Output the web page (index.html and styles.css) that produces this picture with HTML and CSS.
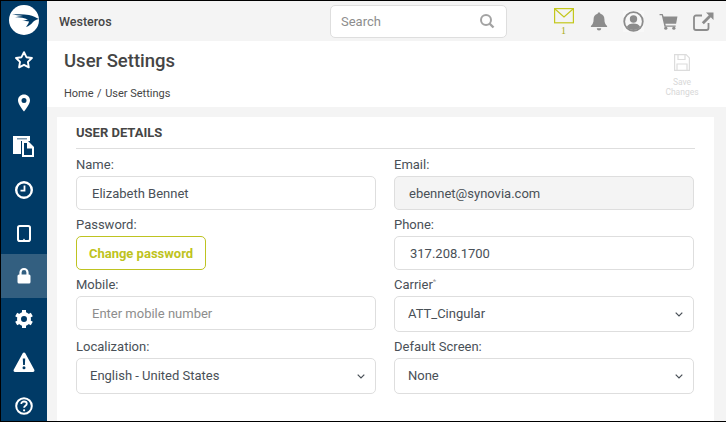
FILE: index.html
```html
<!DOCTYPE html>
<html lang="en">
<head>
  <meta charset="UTF-8">
  <meta name="viewport" content="width=device-width, initial-scale=1.0">
  <title>User Settings</title>
  <link rel="stylesheet" href="styles.css">
</head>
<body>
  <div class="app">
    <nav class="sidebar">
      <div class="logo">
        <svg width="30" height="30" viewBox="0 0 30 30">
          <circle cx="15" cy="15" r="15" fill="#fff"/>
          <path d="M3 9.500 C9 9 15 9 20 10 C24 11 27 12.500 30 14 C27 14.500 25.500 15.500 24 17 C22 19.500 20 21 17 22 C18.500 20 19.500 18.500 20 16.500 L13 15.500 C16 15.500 17 15 19 14.500 C14 12.500 9 12 5 12.500 C8 11.500 11 11 14 11 C10 10.300 6 10 3 9.500 Z" fill="#003a66"/>
        </svg>
      </div>
      <a class="nav-item">
        <svg width="20" height="20" viewBox="0 0 20 20"><path d="M10 2.200l2.400 5 5.500.8-4 3.900.9 5.500-4.800-2.600-4.900 2.600.9-5.500-4-3.900 5.500-.8z" fill="none" stroke="#fff" stroke-width="1.900" stroke-linejoin="round"/></svg>
      </a>
      <a class="nav-item">
        <svg width="20" height="20" viewBox="0 0 20 20"><path fill-rule="evenodd" d="M10 1.500c-3.400 0-6 2.600-6 5.800 0 3.500 4 8.700 6 11.200 2-2.500 6-7.700 6-11.200 0-3.200-2.600-5.800-6-5.800zm0 3.500a2.500 2.500 0 1 1 0 5 2.500 2.500 0 0 1 0-5z" fill="#fff"/></svg>
      </a>
      <a class="nav-item">
        <svg width="22" height="23" viewBox="0 0 22 23"><path d="M0 1h17v5H8v13H0z" fill="#fff"/><path d="M4 3h10v1.500H4z" fill="#7d97ad"/><path d="M9 6h6l6 6v10H9z" fill="#fff"/><path d="M11 8h3v5.500h5V20h-8z" fill="#003a66"/></svg>
      </a>
      <a class="nav-item">
        <svg width="20" height="20" viewBox="0 0 20 20"><circle cx="10" cy="10" r="7.800" fill="none" stroke="#fff" stroke-width="2.400"/><path d="M10.500 5.500v5.200H6.500" fill="none" stroke="#fff" stroke-width="1.800"/></svg>
      </a>
      <a class="nav-item">
        <svg width="20" height="20" viewBox="0 0 20 20"><rect x="4" y="3" width="12" height="15" rx="1.800" fill="none" stroke="#fff" stroke-width="2"/><circle cx="10" cy="16.500" r=".8" fill="#fff"/></svg>
      </a>
      <a class="nav-item active">
        <svg width="20" height="20" viewBox="0 0 20 20"><path d="M6.500 9V6.500a3.500 3.500 0 0 1 7 0V9" fill="none" stroke="#fff" stroke-width="2.200"/><rect x="3.500" y="8.500" width="13" height="9" rx="1.500" fill="#fff"/></svg>
      </a>
      <a class="nav-item">
        <svg width="20" height="20" viewBox="0 0 20 20"><circle cx="10" cy="10" r="5" fill="none" stroke="#fff" stroke-width="4"/><path d="M10 1v4M10 15v4M2.200 5.500l3.500 2M14.300 12.500l3.500 2M17.800 5.500l-3.500 2M5.700 12.500l-3.500 2" stroke="#fff" stroke-width="4"/></svg>
      </a>
      <a class="nav-item">
        <svg width="22" height="22" viewBox="0 0 22 22"><path fill-rule="evenodd" d="M11 1.500c.6 0 1 .3 1.300.8l9 16.500c.5 1-.1 2.200-1.300 2.200H2c-1.200 0-1.800-1.200-1.300-2.200l9-16.500c.3-.5.7-.8 1.300-.8zM9.800 7.500l.3 6.500h1.800l.3-6.500zM11 15.300a1.500 1.500 0 1 0 0 3 1.500 1.500 0 0 0 0-3z" fill="#fff"/></svg>
      </a>
      <a class="nav-item">
        <svg width="20" height="20" viewBox="0 0 20 20"><circle cx="10" cy="10" r="7.800" fill="none" stroke="#fff" stroke-width="2"/><path d="M7.300 8c0-1.600 1.200-2.500 2.700-2.500s2.800.9 2.800 2.300c0 2-2.700 2-2.700 4" fill="none" stroke="#fff" stroke-width="1.800"/><circle cx="10.100" cy="14.300" r="1.100" fill="#fff"/></svg>
      </a>
    </nav>

    <div class="main">
      <header class="topbar">
        <div class="brand">Westeros</div>
        <div class="search">
          <input type="text" placeholder="Search">
          <svg width="16" height="16" viewBox="0 0 16 16"><circle cx="7" cy="7" r="5" fill="none" stroke="#a3a3a3" stroke-width="2"/><path d="M10.500 10.500L14.500 14.500" stroke="#a3a3a3" stroke-width="2.400"/></svg>
        </div>
        <div class="top-icons">
          <a class="top-icon mail">
            <svg width="20" height="16" viewBox="0 0 20 16"><rect x=".6" y=".6" width="18.800" height="14.200" fill="none" stroke="#c3c71c" stroke-width="1.200"/><path d="M1 1l9 8 9-8" fill="none" stroke="#c3c71c" stroke-width="1.200"/></svg>
            <span class="mail-count">1</span>
          </a>
          <a class="top-icon">
            <svg width="18" height="21" viewBox="0 0 20 22"><path d="M10 1c1 0 1.500.6 1.500 1.500 3 .7 4.500 3 4.500 6 0 4 1 5.500 3 7.500v1H1v-1c2-2 3-3.500 3-7.500 0-3 1.500-5.300 4.500-6C8.500 1.600 9 1 10 1z" fill="#8c8c8c"/><path d="M7.500 18.500h5a2.500 2.500 0 0 1-5 0z" fill="#8c8c8c"/></svg>
          </a>
          <a class="top-icon">
            <svg class="user-icon" width="21" height="21" viewBox="0 0 21 21"><circle cx="10.500" cy="10.500" r="9.300" fill="none" stroke="#8c8c8c" stroke-width="1.800"/><circle cx="10.500" cy="8" r="3.700" fill="#8c8c8c"/><path d="M3.800 16c1-2.500 3.500-3.500 6.700-3.500s5.700 1 6.700 3.500c-1.700 2-4 3-6.700 3s-5-1-6.700-3z" fill="#8c8c8c"/></svg>
          </a>
          <a class="top-icon">
            <svg width="19" height="17" viewBox="0 0 20 19"><path d="M0 1h3.500l1 3H20l-1.500 8H6.500l.4 2H18v1.500H5.500L2.500 2.500H0z" fill="#8c8c8c"/><circle cx="7" cy="17" r="1.800" fill="#8c8c8c"/><circle cx="16" cy="17" r="1.800" fill="#8c8c8c"/></svg>
          </a>
          <a class="top-icon">
            <svg width="21" height="19" viewBox="0 0 21 19"><path d="M9 3.500H3A2 2 0 0 0 1 5.500v10.500a2 2 0 0 0 2 2h10.500a2 2 0 0 0 2-2v-5" fill="none" stroke="#8c8c8c" stroke-width="1.800"/><path d="M13 .5h7.500V8l-2.700-2.700-7 7-2-2 7-7z" fill="#8c8c8c"/></svg>
          </a>
        </div>
      </header>

      <div class="page-head">
        <div class="page-title">
          <h1>User Settings</h1>
          <div class="breadcrumb">Home<span class="sep">/</span>User Settings</div>
        </div>
        <button class="save-btn" disabled>
          <svg width="16" height="17" viewBox="0 0 16 17"><path d="M.6.6h11.500l3.300 3.300v12.500H.6z" fill="none" stroke="#dcdcdc" stroke-width="1.200"/><path d="M4 1v4.500h7V1M3 16v-6h10v6" fill="none" stroke="#dcdcdc" stroke-width="1.200"/></svg>
          <span>Save<br>Changes</span>
        </button>
      </div>

      <div class="content">
        <section class="card">
          <h2>USER DETAILS</h2>
          <div class="form-grid">
            <div class="field">
              <label>Name:</label>
              <input type="text" value="Elizabeth Bennet">
            </div>
            <div class="field">
              <label>Email:</label>
              <input type="text" value="ebennet@synovia.com" class="readonly" readonly>
            </div>
            <div class="field">
              <label>Password:</label>
              <button class="change-btn">Change password</button>
            </div>
            <div class="field">
              <label>Phone:</label>
              <input type="text" value="317.208.1700">
            </div>
            <div class="field">
              <label>Mobile:</label>
              <input type="text" placeholder="Enter mobile number">
            </div>
            <div class="field">
              <label>Carrier<sup>*</sup></label>
              <select><option>ATT_Cingular</option></select>
            </div>
            <div class="field">
              <label>Localization:</label>
              <select><option>English - United States</option></select>
            </div>
            <div class="field">
              <label>Default Screen:</label>
              <select><option>None</option></select>
            </div>
          </div>
        </section>
      </div>
    </div>
  </div>
</body>
</html>
```

FILE: styles.css
```css
* {
  margin: 0;
  padding: 0;
  box-sizing: border-box;
}

html,
body {
  height: 100%;
  overflow: hidden;
}

body {
  font-family: Roboto, "Liberation Sans", sans-serif;
  color: #495057;
  background-color: #f4f4f4;
  border-top: 1px solid #000;
  border-left: 1px solid #000;
  border-bottom: 1px solid #000;
}

.app {
  display: flex;
  height: 100%;
}

/* sidebar */
.sidebar {
  width: 46px;
  flex-shrink: 0;
  overflow: hidden;
  background-color: #003a66;
  display: flex;
  flex-direction: column;
}

.logo {
  height: 37.5px;
  flex-shrink: 0;
  display: flex;
  justify-content: center;
  align-items: center;
}

.nav-item {
  height: 43.2px;
  flex-shrink: 0;
  display: flex;
  justify-content: center;
  align-items: center;
}

.nav-item.active {
  background-color: #335f80;
}

/* top bar */
.main {
  flex: 1;
  min-width: 0;
  display: flex;
  flex-direction: column;
}

.topbar {
  height: 40px;
  flex-shrink: 0;
  display: flex;
  align-items: center;
  padding-left: 12px;
  background-color: #f4f4f4;
}

.brand {
  width: 271px;
  font-size: 12.5px;
  font-weight: 500;
  color: #454545;
}

.search {
  width: 177px;
  height: 33px;
  padding: 0 11px 0 10px;
  display: flex;
  align-items: center;
  background-color: #fff;
  border: 1px solid #dedede;
  border-radius: 5px;
}

.search input {
  flex: 1;
  min-width: 0;
  border: none;
  outline: none;
  font-family: inherit;
  font-size: 13px;
}

.search input::placeholder {
  color: #8d8d8d;
}

.top-icons {
  display: flex;
  margin-left: 39px;
  height: 40px;
}

.top-icon {
  width: 35px;
  height: 40px;
  display: flex;
  flex-direction: column;
  justify-content: center;
  align-items: center;
}

.top-icon.mail {
  justify-content: flex-start;
  padding-top: 7px;
}

.mail-count {
  margin-top: 2px;
  font-family: "Liberation Serif", serif;
  font-size: 10px;
  line-height: 10px;
  color: #a8ac20;
}

.user-icon {
  background-color: #f8f8f8;
}

/* page header */
.page-head {
  height: 66px;
  flex-shrink: 0;
  display: flex;
  justify-content: space-between;
  padding: 0 24px 0 17px;
  background-color: #fff;
}

.page-title h1 {
  margin-top: 8px;
  font-size: 18.5px;
  line-height: 24px;
  font-weight: 500;
  color: #454545;
}

.breadcrumb {
  margin-top: 13px;
  font-size: 11px;
  line-height: 16px;
  color: #454545;
}

.sep {
  margin: 0 3.500px;
}

.save-btn {
  width: 40px;
  padding-top: 13px;
  display: flex;
  flex-direction: column;
  align-items: center;
  gap: 6px;
  border: none;
  background: none;
  font-family: inherit;
  font-size: 8.500px;
  line-height: 10px;
  color: #d8d8d8;
}

/* card */
.content {
  flex: 1;
  padding: 10px 12px 0 10px;
}

.card {
  height: 100%;
  padding: 0 19px;
  background-color: #fff;
}

.card h2 {
  height: 32px;
  padding-top: 8px;
  font-size: 13px;
  line-height: 16px;
  font-weight: 700;
  color: #454545;
  border-bottom: 1px solid #dedede;
}

.form-grid {
  display: grid;
  grid-template-columns: 300px 300px;
  column-gap: 18px;
  padding-top: 5px;
}

.field {
  display: flex;
  flex-direction: column;
  margin-bottom: 4px;
}

.field label {
  height: 22px;
  font-size: 13px;
  line-height: 21px;
}

.field sup {
  font-size: 8px;
  line-height: 0;
  color: #999;
}

.field input,
.field select {
  height: 34px;
  font-family: inherit;
  font-size: 13px;
  color: #495057;
  background-color: #fff;
  border: 1px solid #dedede;
  border-radius: 5px;
  outline: none;
}

.field input {
  padding: 0 15px;
}

.field input::placeholder {
  color: #8d8d8d;
}

.field input.readonly {
  background-color: #f4f4f4;
  padding-left: 14px;
}

.field select {
  height: 36px;
  padding: 0 13px 2px;
  appearance: none;
  background-image: url("data:image/svg+xml,%3Csvg xmlns='http://www.w3.org/2000/svg' width='8' height='5'%3E%3Cpath d='M.7.7l3.300 3.300 3.300-3.300' fill='none' stroke='%23495057' stroke-width='1.200'/%3E%3C/svg%3E");
  background-repeat: no-repeat;
  background-position: right 10px center;
}

.change-btn {
  align-self: flex-start;
  width: 130px;
  height: 34px;
  font-family: inherit;
  font-size: 13px;
  font-weight: 700;
  color: #bec321;
  background-color: #fff;
  border: 1px solid #bec321;
  border-radius: 5px;
}
```
